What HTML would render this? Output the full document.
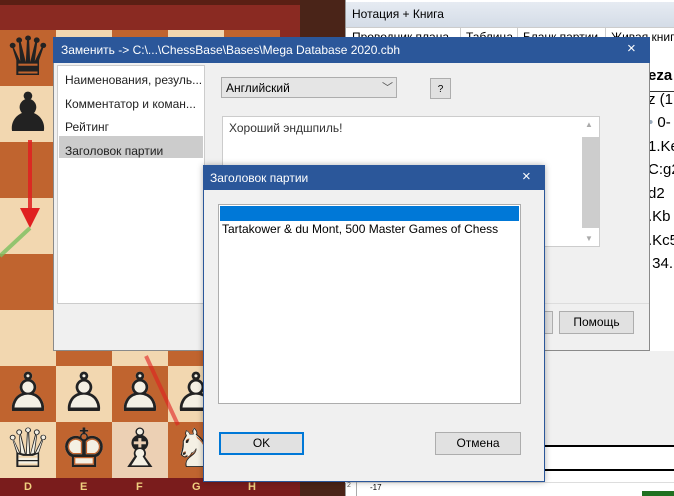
<!DOCTYPE html>
<html><head><meta charset="utf-8"><style>
*{margin:0;padding:0;box-sizing:border-box}
body{width:674px;height:496px;overflow:hidden;position:relative;font-family:"Liberation Sans","DejaVu Sans",sans-serif;font-size:12px;color:#000;background:#fff}
.a{position:absolute}
.sq{position:absolute;width:56px;height:56px}
.d{background:#c0642f}
.l{background:#f2d7b0}
.pc{position:absolute;width:56px;height:56px;font-family:"DejaVu Sans",sans-serif;font-size:54px;line-height:54px;text-align:center}
.w{color:#f4f0e4}
.o{color:#222}
.btn{position:absolute;background:#e1e1e1;border:1px solid #adadad;text-align:center;line-height:21px;font-size:12px}
</style></head><body>
<div class="a" style="left:0;top:0;width:345px;height:496px;background:#5a1f14"></div>
<div class="a" style="left:0;top:5px;width:300px;height:491px;background:#8a2a22"></div>
<div class="a" style="left:300px;top:0;width:45px;height:496px;background:#4a2418"></div>
<div class="sq d" style="left:0;top:30px"></div><div class="sq l" style="left:56px;top:30px"></div><div class="sq d" style="left:112px;top:30px"></div><div class="sq l" style="left:168px;top:30px"></div><div class="sq d" style="left:224px;top:30px"></div>
<div class="sq l" style="left:0;top:86px"></div><div class="sq d" style="left:56px;top:86px"></div>
<div class="sq d" style="left:0;top:142px"></div>
<div class="sq l" style="left:0;top:198px"></div>
<div class="sq d" style="left:0;top:254px"></div>
<div class="sq l" style="left:0;top:310px"></div><div class="sq d" style="left:56px;top:310px"></div><div class="sq l" style="left:112px;top:310px"></div><div class="sq d" style="left:168px;top:310px"></div>
<div class="sq d" style="left:0;top:366px"></div><div class="sq l" style="left:56px;top:366px"></div><div class="sq d" style="left:112px;top:366px"></div><div class="sq l" style="left:168px;top:366px"></div>
<div class="sq l" style="left:0;top:422px"></div><div class="sq d" style="left:56px;top:422px"></div><div class="sq l" style="left:112px;top:422px;background:#ecd0b4"></div><div class="sq d" style="left:168px;top:422px"></div>
<div class="a" style="left:0;top:478px;width:300px;height:18px;background:#7a1c1c;color:#f0d080;font-size:11px;font-weight:bold">
<span class="a" style="left:24px;top:3px">D</span><span class="a" style="left:80px;top:3px">E</span><span class="a" style="left:136px;top:3px">F</span><span class="a" style="left:192px;top:3px">G</span><span class="a" style="left:248px;top:3px">H</span></div>
<div class="pc o" style="left:0;top:30px">♛</div>
<div class="pc o" style="left:0;top:86px">♟</div>
<div class="pc w" style="left:0;top:366px">♟</div><div class="pc o" style="left:0;top:366px">♙</div>
<div class="pc w" style="left:56px;top:366px">♟</div><div class="pc o" style="left:56px;top:366px">♙</div>
<div class="pc w" style="left:112px;top:366px">♟</div><div class="pc o" style="left:112px;top:366px">♙</div>
<div class="pc w" style="left:168px;top:366px">♟</div><div class="pc o" style="left:168px;top:366px">♙</div>
<div class="pc w" style="left:0;top:422px">♛</div><div class="pc o" style="left:0;top:422px">♕</div>
<div class="pc w" style="left:56px;top:422px">♚</div><div class="pc o" style="left:56px;top:422px">♔</div>
<div class="pc w" style="left:112px;top:422px">♝</div><div class="pc o" style="left:112px;top:422px">♗</div>
<div class="pc w" style="left:168px;top:422px">♞</div><div class="pc o" style="left:168px;top:422px">♘</div>
<svg class="a" style="left:0;top:0" width="300" height="496">
<line x1="30" y1="140" x2="30" y2="215" stroke="#e02020" stroke-width="4" opacity=".85"/>
<polygon points="20,208 40,208 30,228" fill="#e02020"/>
<line x1="30" y1="228" x2="0" y2="256" stroke="#7cc060" stroke-width="4" opacity=".8"/>
<line x1="178" y1="425" x2="146" y2="356" stroke="#e02020" stroke-width="4" opacity=".6"/>
</svg>
<div class="a" style="left:345px;top:0;width:329px;height:496px;background:#fff;border-left:1px solid #999"></div>
<div class="a" style="left:346px;top:2px;width:328px;height:25px;background:linear-gradient(#e6ebf2,#d4dce7)"><span class="a" style="left:6px;top:5px;font-size:12px">Нотация + Книга</span></div>
<div class="a" style="left:346px;top:27px;width:328px;height:14px;background:#fff;border-top:1px solid #ccc;white-space:nowrap;font-size:12px">
<span class="a" style="left:6px;top:2px">Проводник плана</span><span class="a" style="left:114px;top:0;height:14px;border-left:1px solid #ccc"></span>
<span class="a" style="left:120px;top:2px">Таблица</span><span class="a" style="left:171px;top:0;height:14px;border-left:1px solid #ccc"></span>
<span class="a" style="left:177px;top:2px">Бланк партии</span><span class="a" style="left:259px;top:0;height:14px;border-left:1px solid #ccc"></span>
<span class="a" style="left:265px;top:2px">Живая книга</span></div>
<div class="a" style="left:648px;top:64px;font-size:15px;line-height:23.5px;white-space:nowrap">
<div><b>eza</b> <span style="color:#e0a000">.</span></div><div>z (1.</div><div><span style="color:#9ab">•</span> 0-</div><div>1.Ke</div><div>C:g2</div><div>d2</div><div>.Kb</div><div>.Kc5</div><div>&nbsp;34.</div></div>
<div class="a" style="left:650px;top:91px;width:24px;border-top:1px solid #333"></div>
<div class="a" style="left:545px;top:351px;width:129px;height:94px;background:#f0f0f0"></div>
<div class="a" style="left:545px;top:445px;width:129px;height:2px;background:#000"></div>
<div class="a" style="left:545px;top:469px;width:129px;height:2px;background:#000"></div>
<div class="a" style="left:345px;top:482px;width:329px;border-top:1px solid #ddd"></div>
<div class="a" style="left:347px;top:482px;width:10px;height:14px;border-right:1px solid #aaa;font-size:7px;color:#555">2</div>
<div class="a" style="left:370px;top:483px;font-size:8px">-17</div>
<div class="a" style="left:642px;top:491px;width:32px;height:5px;background:#207020"></div>
<div class="a" style="left:53px;top:37px;width:597px;height:314px;background:#f0f0f0;border:1px solid #8a8a8a"></div>
<div class="a" style="left:53px;top:37px;width:597px;height:26px;background:#2b579a;color:#fff;font-size:12px"><span class="a" style="left:8px;top:6px;white-space:nowrap">Заменить -&gt; C:\...\ChessBase\Bases\Mega Database 2020.cbh</span><span class="a" style="left:574px;top:3px;font-size:15px">×</span></div>
<div class="a" style="left:57px;top:65px;width:148px;height:239px;background:#fff;border:1px solid #ccc"></div>
<div class="a" style="left:59px;top:136px;width:144px;height:22px;background:#ccc"></div>
<div class="a" style="left:65px;top:69px;line-height:23.5px;font-size:12px;color:#222;white-space:nowrap"><div>Наименования, резуль...</div><div>Комментатор и коман...</div><div>Рейтинг</div><div>Заголовок партии</div></div>
<div class="a" style="left:221px;top:77px;width:176px;height:21px;background:#e5e5e5;border:1px solid #adadad"><span class="a" style="left:4px;top:3px">Английский</span><span class="a" style="left:160px;top:1px;color:#555;font-size:11px">﹀</span></div>
<div class="btn" style="left:430px;top:78px;width:21px;height:21px;font-size:10px">?</div>
<div class="a" style="left:222px;top:116px;width:378px;height:131px;background:#fff;border:1px solid #ccc"><span class="a" style="left:6px;top:4px;color:#333">Хороший эндшпиль!</span>
<div class="a" style="left:359px;top:20px;width:17px;height:91px;background:#cdcdcd"></div>
<span class="a" style="left:362px;top:3px;color:#aaa;font-size:8px">▲</span><span class="a" style="left:362px;top:117px;color:#aaa;font-size:8px">▼</span></div>
<div class="a" style="left:505px;top:303px;width:144px;border-top:1px solid #ddd"></div>
<div class="btn" style="left:520px;top:311px;width:33px;height:23px"></div>
<div class="btn" style="left:559px;top:311px;width:75px;height:23px;line-height:21px">Помощь</div>
<div class="a" style="left:203px;top:165px;width:342px;height:317px;background:#f0f0f0;border:1px solid #2b579a;box-shadow:0 0 6px rgba(0,0,0,.3)"></div>
<div class="a" style="left:203px;top:165px;width:342px;height:25px;background:#2b579a;color:#fff"><span class="a" style="left:7px;top:6px">Заголовок партии</span><span class="a" style="left:319px;top:3px;font-size:15px">×</span></div>
<div class="a" style="left:218px;top:204px;width:303px;height:200px;background:#fff;border:1px solid #adadad"></div>
<div class="a" style="left:220px;top:206px;width:299px;height:15px;background:#0078d7"></div>
<div class="a" style="left:222px;top:222px;color:#000">Tartakower &amp; du Mont, 500 Master Games of Chess</div>
<div class="btn" style="left:219px;top:432px;width:85px;height:23px;border:2px solid #0078d7;line-height:19px">OK</div>
<div class="btn" style="left:435px;top:432px;width:86px;height:23px">Отмена</div>
</body></html>
